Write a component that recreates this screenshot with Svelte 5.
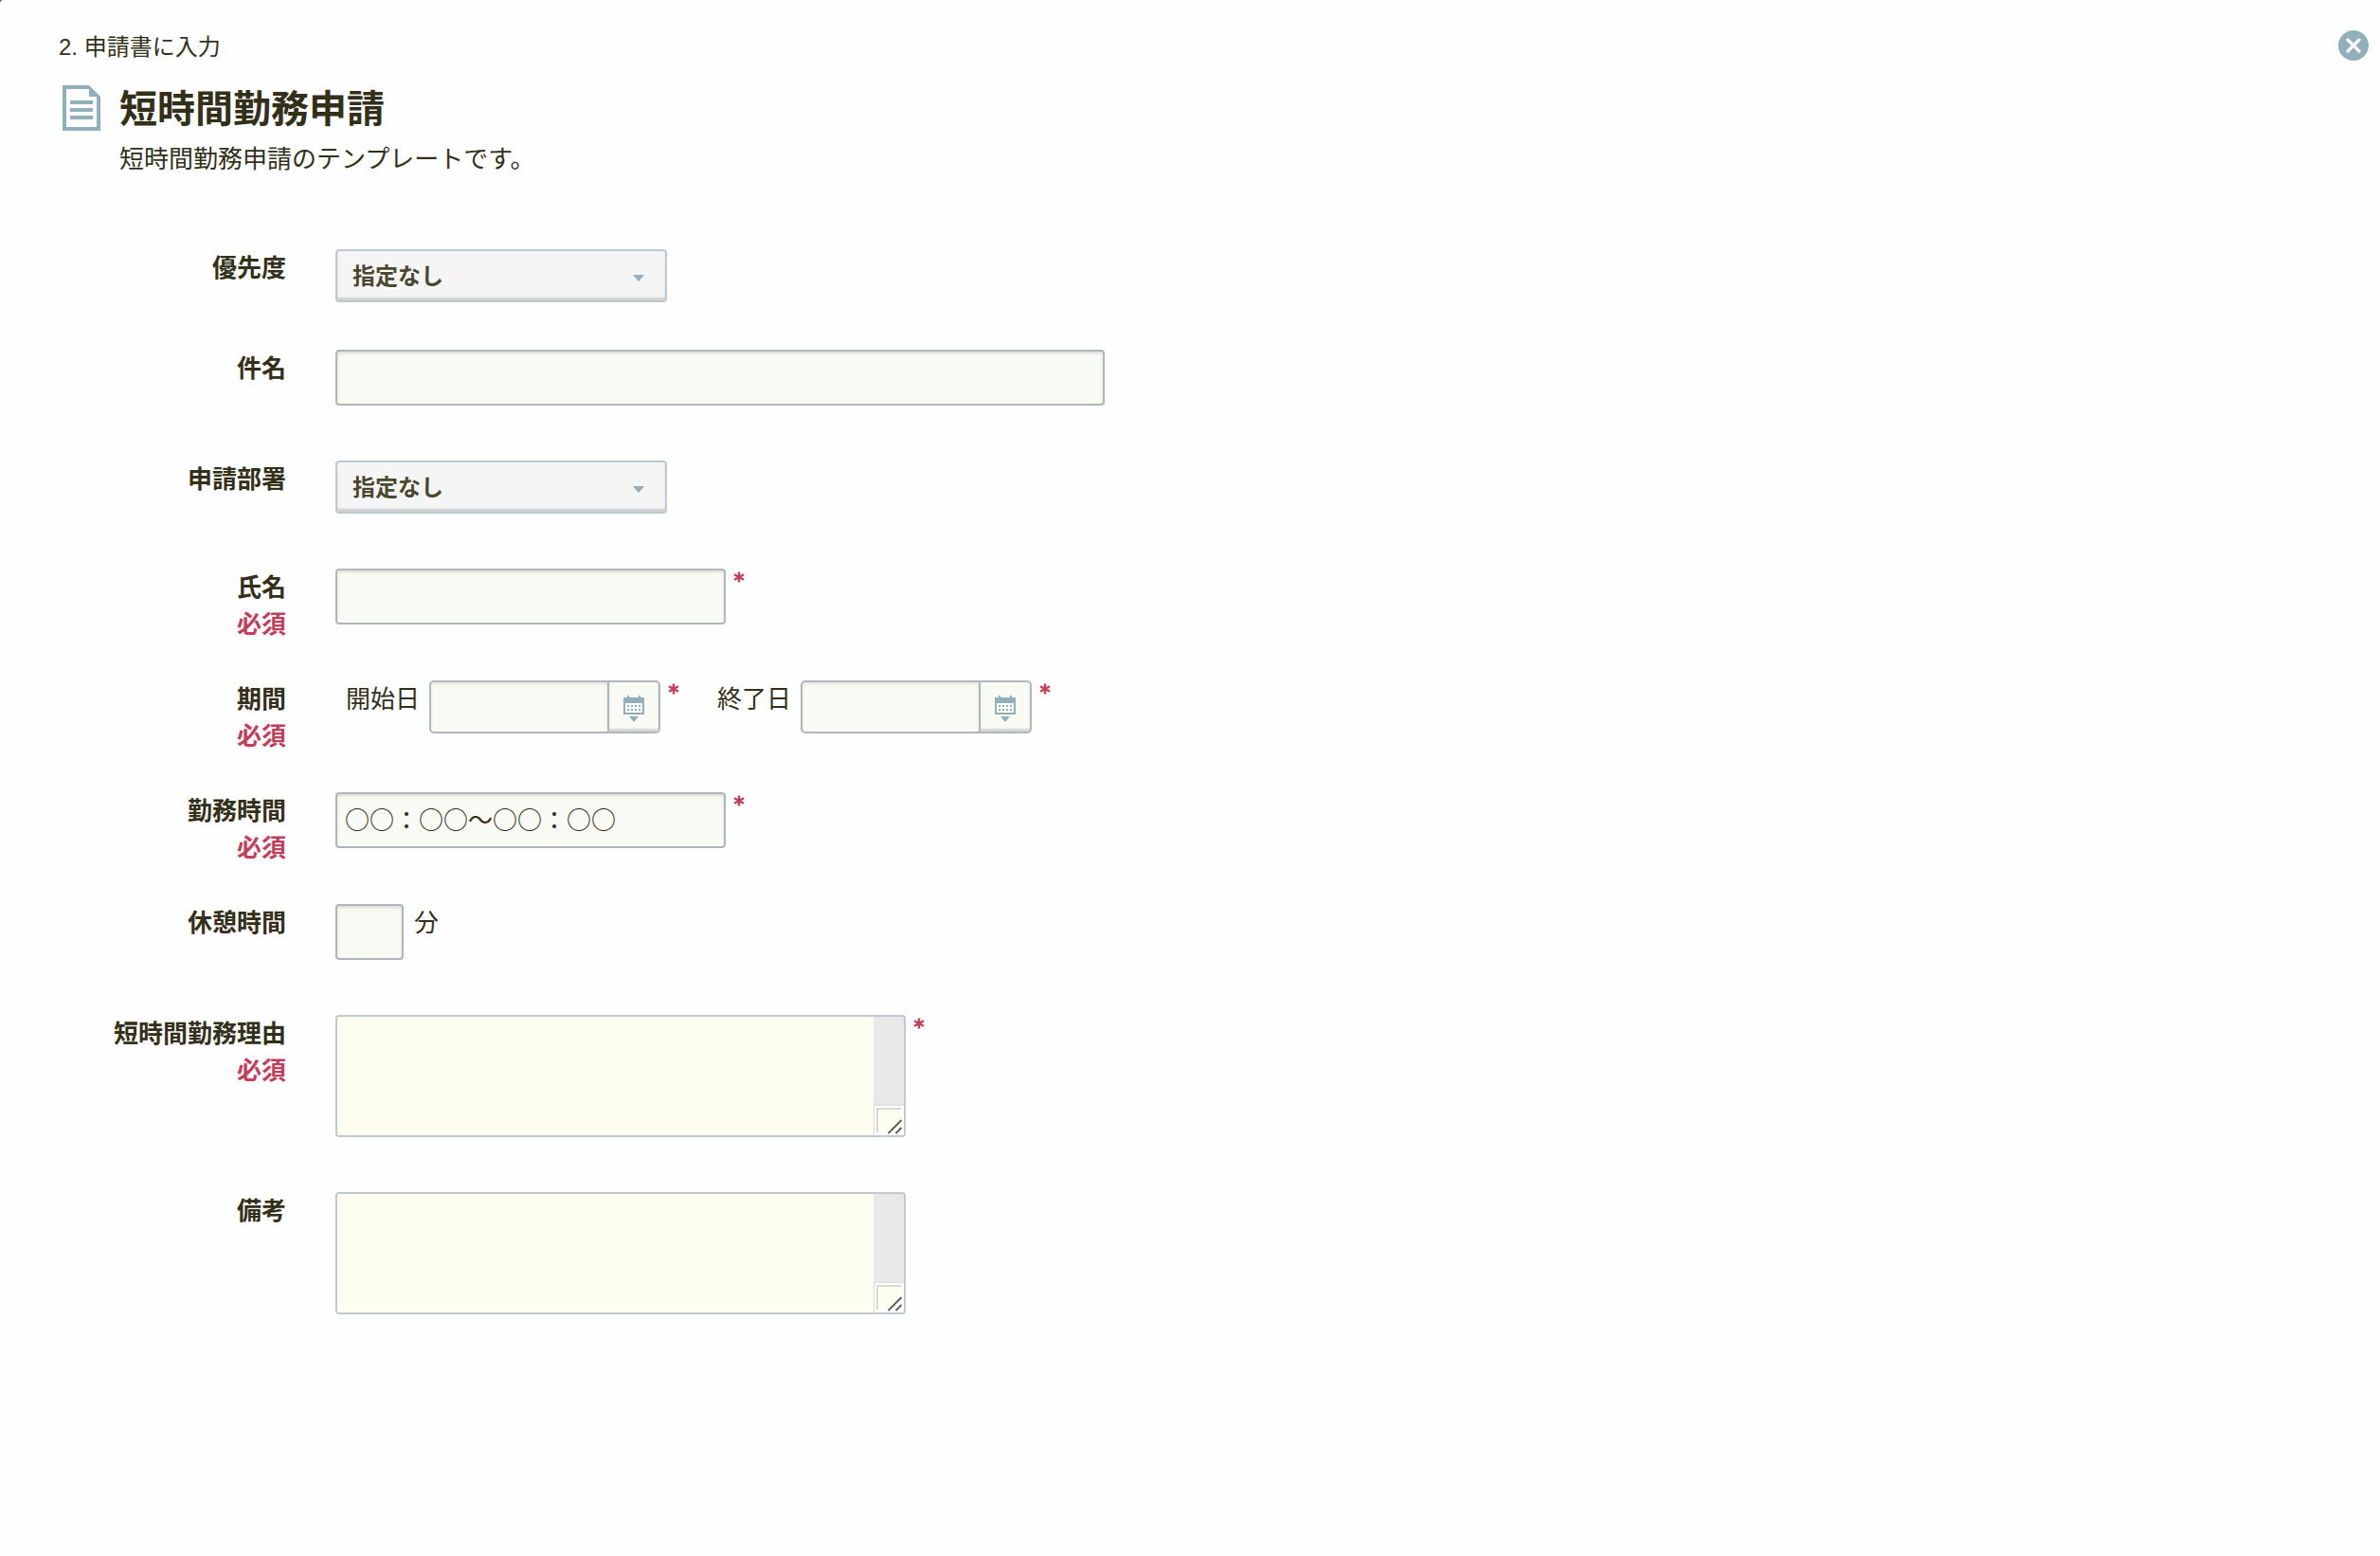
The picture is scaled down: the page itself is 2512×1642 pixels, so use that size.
<script>
  const fields = [
    { id: 'priority', label: '優先度', type: 'select', first: true },
    { id: 'subject', label: '件名', type: 'text', size: 'wide', value: '' },
    { id: 'department', label: '申請部署', type: 'select' },
    { id: 'name', label: '氏名', type: 'text', size: 'medium', required: true, value: '' },
    { id: 'period', label: '期間', type: 'dates', required: true },
    { id: 'hours', label: '勤務時間', type: 'text', size: 'medium', required: true, value: '○○：○○〜○○：○○' },
    { id: 'break', label: '休憩時間', type: 'text', size: 'small', unit: '分', value: '' },
    { id: 'reason', label: '短時間勤務理由', type: 'area', required: true },
    { id: 'notes', label: '備考', type: 'area' },
  ];
  const dates = [
    { id: 'start', label: '開始日' },
    { id: 'end', label: '終了日' },
  ];
</script>

{#snippet star()}
  <svg class="star" width="12" height="12" viewBox="0 0 12 12" role="img" aria-label="必須">
    <path d="M6 .5V11.5M1 3.2 11 8.8M11 3.2 1 8.8" stroke="currentColor" stroke-width="2.4" />
  </svg>
{/snippet}

<main class="dialog">
  <header>
    <div class="heading">
      <p class="step">2. 申請書に入力</p>
      <div class="title">
        <svg width="40" height="48" viewBox="0 0 40 48" aria-hidden="true">
          <path fill="currentColor" fill-rule="evenodd" d="M0 0H28L40 12V48H0ZM4 4V44H36V12H28V4Z" />
          <path stroke="currentColor" stroke-width="4" d="M8 18H32M8 26H32M8 34H32" />
        </svg>
        <h1>短時間勤務申請</h1>
      </div>
      <p class="description">短時間勤務申請のテンプレートです。</p>
    </div>
    <button class="close" type="button" aria-label="閉じる">
      <svg width="32" height="32" viewBox="0 0 32 32" aria-hidden="true">
        <circle cx="16" cy="16" r="16" fill="currentColor" />
        <path d="M10 10 22 22M22 10 10 22" stroke="#fff" stroke-width="3.2" stroke-linecap="round" />
      </svg>
    </button>
  </header>

  <form>
    {#each fields as field (field.id)}
      <div class="row {field.type}" class:first={field.first} class:required={field.required}>
        <label class="name" for={field.type === 'dates' ? 'start' : field.id}>
          {field.label}
          {#if field.required}<span class="must">必須</span>{/if}
        </label>
        <div class="control">
          {#if field.type === 'select'}
            <div class="picker">
              <select id={field.id}><option>指定なし</option></select>
              <svg class="arrow" width="12" height="7" viewBox="0 0 12 7" aria-hidden="true">
                <path d="M0 0H12L6 7Z" fill="currentColor" />
              </svg>
            </div>
          {:else if field.type === 'text'}
            <input class="box {field.size}" id={field.id} type="text" value={field.value} />
            {#if field.unit}<span class="unit">{field.unit}</span>{/if}
            {#if field.required}{@render star()}{/if}
          {:else if field.type === 'dates'}
            {#each dates as date (date.id)}
              <div class="date">
                <label for={date.id}>{date.label}</label>
                <div class="datebox">
                  <input id={date.id} type="text" />
                  <button type="button" aria-label="カレンダー">
                    <svg width="22" height="28" viewBox="0 0 22 28" aria-hidden="true">
                      <path fill="currentColor" fill-rule="evenodd" d="M0 2H4V0H6V2H16V0H18V2H22V20H0ZM2 8V18H20V8Z" />
                      <path fill="currentColor" d="M4 10h2v2h-2zM8 10h2v2h-2zM12 10h2v2h-2zM16 10h2v2h-2zM4 14h2v2h-2zM8 14h2v2h-2zM12 14h2v2h-2zM16 14h2v2h-2zM6 22H16L11 28Z" />
                    </svg>
                  </button>
                </div>
                {@render star()}
              </div>
            {/each}
          {:else}
            <div class="areabox">
              <textarea id={field.id}></textarea>
              <div class="track">
                <svg width="32" height="32" viewBox="0 0 32 32" aria-hidden="true">
                  <path fill="#fff" d="M0 0H32V32H0Z" />
                  <path fill="#dcdce0" d="M0 0H32V1H1V32H0Z" />
                  <path fill="#fdfdf0" d="M5 5H29V29H5Z" />
                  <path fill="#d9d9ce" d="M3 3H29V5H5V29H3Z" />
                  <path stroke="#5a5a58" stroke-width="1.8" d="M15.500 30 29.500 16M23.500 30 29.500 24" />
                </svg>
              </div>
            </div>
            {#if field.required}{@render star()}{/if}
          {/if}
        </div>
      </div>
    {/each}
  </form>
</main>

<style>
  :global(body) {
    background: #4f6670;
  }
  .dialog {
    box-sizing: border-box;
    min-height: 100vh;
    padding: 32px 12px 60px 62px;
    border-top-left-radius: 4px;
    background: #fefefe;
    color: #333019;
    font: 26px/35px "Noto Sans CJK JP", sans-serif;
  }
  header {
    display: flex;
    justify-content: space-between;
    align-items: flex-start;
    margin-bottom: 80px;
  }
  p,
  h1 {
    margin: 0;
  }
  .step {
    font-family: "Liberation Sans", "Noto Sans CJK JP", sans-serif;
    font-size: 24px;
    line-height: 35px;
  }
  .title {
    display: flex;
    align-items: center;
    gap: 20px;
    margin: 19px 0 6px 4px;
    color: #92afbc;
  }
  h1 {
    padding-bottom: 4px;
    color: #333019;
    font-size: 40px;
    line-height: 52px;
  }
  .description {
    margin-left: 64px;
  }
  button {
    padding: 0;
    border: 0;
    background: none;
    color: #92afbc;
    cursor: pointer;
  }
  svg {
    display: block;
    flex: none;
  }
  .row {
    display: grid;
    grid-template-columns: 240px 1fr;
    column-gap: 52px;
    min-height: 117px;
  }
  .row.required {
    min-height: 118px;
  }
  .row.select {
    min-height: 114px;
  }
  .row.first {
    min-height: 106px;
  }
  .row.area {
    min-height: 187px;
  }
  .name {
    font-weight: 700;
    text-align: right;
  }
  .must {
    display: block;
    margin-top: 4px;
    color: #c43d5a;
  }
  .control,
  .date {
    display: flex;
    align-items: flex-start;
  }
  .star {
    margin: 3px 0 0 8px;
    color: #c43d5a;
  }
  .unit {
    margin-left: 11px;
  }
  input,
  select,
  textarea {
    box-sizing: border-box;
    margin: 0;
    color: inherit;
    font: inherit;
    outline: none;
  }
  .picker {
    position: relative;
    width: 350px;
  }
  select {
    display: block;
    width: 100%;
    height: 56px;
    padding: 0 40px 4px 16px;
    appearance: none;
    border: 2px solid #becacd;
    border-radius: 4px;
    background: #f5f5f6;
    box-shadow: inset 0 -3px 2px #cfd0d0;
    color: #4b4830;
    font-size: 24px;
    font-weight: 700;
    text-shadow: 0 2px 0 #fff;
  }
  .arrow {
    position: absolute;
    top: 27px;
    right: 24px;
    color: #92afbc;
    pointer-events: none;
  }
  .box {
    height: 59px;
    padding: 0 8px 4px;
    border: 2px solid #afb7ba;
    border-radius: 4px;
    background: #f9faf4;
    box-shadow: inset 0 2px 3px #dcdcd8;
  }
  .wide {
    width: 812px;
  }
  .medium {
    width: 412px;
  }
  .small {
    width: 72px;
  }
  .date {
    margin-left: 11px;
  }
  .date + .date {
    margin-left: 40px;
  }
  .date label {
    margin-right: 10px;
  }
  .datebox {
    display: flex;
    box-sizing: border-box;
    width: 244px;
    height: 56px;
    overflow: hidden;
    border: 2px solid #afb7ba;
    border-radius: 5px;
    background: #f9faf4;
  }
  .datebox input {
    flex: 1;
    min-width: 0;
    padding: 0 8px;
    border: 0;
    background: none;
    box-shadow: inset 0 2px 3px #e4e4df;
  }
  .datebox button {
    display: flex;
    justify-content: center;
    align-items: center;
    width: 54px;
    padding-top: 4px;
    border-left: 2px solid #afb7ba;
    box-shadow: inset 0 -3px 2px #d4d5d0;
  }
  .areabox {
    display: flex;
    box-sizing: border-box;
    width: 602px;
    height: 129px;
    overflow: hidden;
    border: 2px solid #becacd;
    border-radius: 4px;
  }
  textarea {
    flex: 1;
    padding: 8px;
    overflow: hidden;
    border: 0;
    background: #fdfef0;
    resize: none;
  }
  .track {
    display: flex;
    align-items: flex-end;
    background: #e8e8e8;
  }
</style>
